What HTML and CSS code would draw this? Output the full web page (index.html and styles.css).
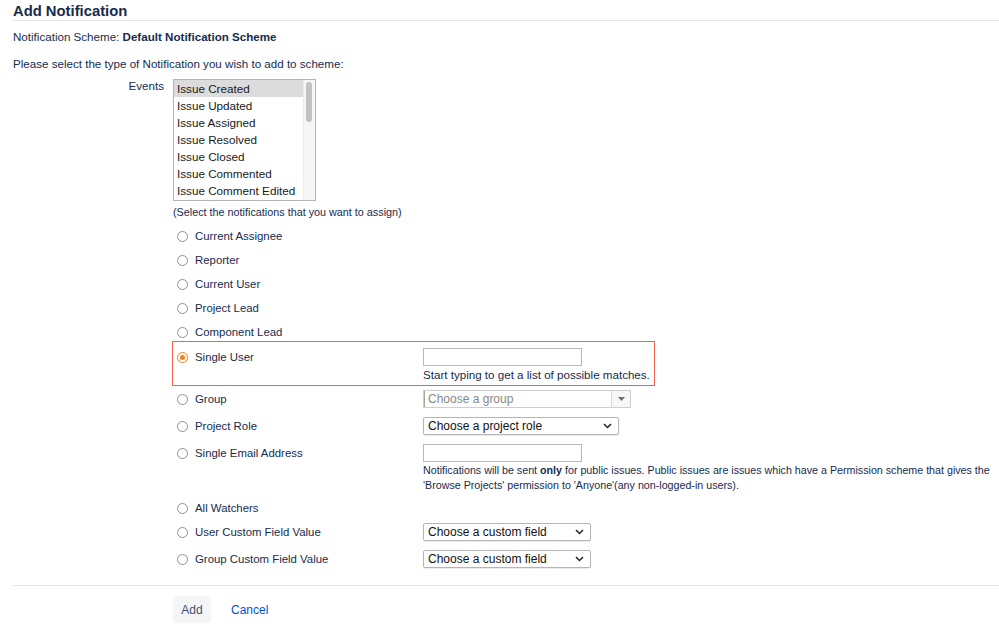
FILE: index.html
```html
<!DOCTYPE html>
<html>
<head>
  <title>Add Notification</title>
  <link rel="stylesheet" href="styles.css">
</head>
<body>
  <div class="page">
    <h2 class="page-title">Add Notification</h2>
    <p class="scheme">Notification Scheme: <b>Default Notification Scheme</b></p>
    <p class="intro">Please select the type of Notification you wish to add to scheme:</p>

    <div class="events">
      <div class="events-label">Events</div>
      <div class="events-field">
        <div class="listbox">
          <div class="list-items">
            <div class="list-item selected">Issue Created</div>
            <div class="list-item">Issue Updated</div>
            <div class="list-item">Issue Assigned</div>
            <div class="list-item">Issue Resolved</div>
            <div class="list-item">Issue Closed</div>
            <div class="list-item">Issue Commented</div>
            <div class="list-item">Issue Comment Edited</div>
          </div>
          <div class="list-scroll"><div class="list-thumb"></div></div>
        </div>
        <div class="events-hint">(Select the notifications that you want to assign)</div>
      </div>
    </div>

    <div class="options">
      <div class="opt">
        <span class="radio"></span><span class="opt-label">Current Assignee</span>
      </div>
      <div class="opt">
        <span class="radio"></span><span class="opt-label">Reporter</span>
      </div>
      <div class="opt">
        <span class="radio"></span><span class="opt-label">Current User</span>
      </div>
      <div class="opt">
        <span class="radio"></span><span class="opt-label">Project Lead</span>
      </div>
      <div class="opt">
        <span class="radio"></span><span class="opt-label">Component Lead</span>
      </div>
      <div class="opt highlight">
        <span class="radio checked"></span><span class="opt-label">Single User</span>
        <div class="opt-field">
          <input class="text-input" type="text">
          <div class="field-hint">Start typing to get a list of possible matches.</div>
        </div>
      </div>
      <div class="opt tall">
        <span class="radio"></span><span class="opt-label">Group</span>
        <div class="opt-field">
          <div class="group-picker">
            <span class="group-input">Choose a group</span>
            <span class="group-btn">
              <svg width="7" height="4" viewBox="0 0 7 4"><path d="M0 0h7L3.5 4z" fill="#707070"/></svg>
            </span>
          </div>
        </div>
      </div>
      <div class="opt tall">
        <span class="radio"></span><span class="opt-label">Project Role</span>
        <div class="opt-field">
          <div class="select role-select">
            <span>Choose a project role</span>
            <svg class="chev" width="9" height="6" viewBox="0 0 9 6"><path d="M1 1l3.5 3.5L8 1" fill="none" stroke="#222" stroke-width="1.5"/></svg>
          </div>
        </div>
      </div>
      <div class="opt email">
        <span class="radio"></span><span class="opt-label">Single Email Address</span>
        <div class="opt-field">
          <input class="text-input" type="text">
          <p class="field-note">Notifications will be sent <b>only</b> for public issues. Public issues are issues which have a Permission scheme that gives the 'Browse Projects' permission to 'Anyone'(any non-logged-in users).</p>
        </div>
      </div>
      <div class="opt">
        <span class="radio"></span><span class="opt-label">All Watchers</span>
      </div>
      <div class="opt tall">
        <span class="radio"></span><span class="opt-label">User Custom Field Value</span>
        <div class="opt-field">
          <div class="select cf-select">
            <span>Choose a custom field</span>
            <svg class="chev" width="9" height="6" viewBox="0 0 9 6"><path d="M1 1l3.5 3.5L8 1" fill="none" stroke="#222" stroke-width="1.5"/></svg>
          </div>
        </div>
      </div>
      <div class="opt tall">
        <span class="radio"></span><span class="opt-label">Group Custom Field Value</span>
        <div class="opt-field">
          <div class="select cf-select">
            <span>Choose a custom field</span>
            <svg class="chev" width="9" height="6" viewBox="0 0 9 6"><path d="M1 1l3.5 3.5L8 1" fill="none" stroke="#222" stroke-width="1.5"/></svg>
          </div>
        </div>
      </div>
    </div>

    <div class="buttons">
      <button class="add-btn">Add</button>
      <a class="cancel-link" href="#">Cancel</a>
    </div>
  </div>
</body>
</html>
```

FILE: styles.css
```css
body {
  margin: 0;
  font-family: "Liberation Sans", Arial, sans-serif;
  color: #172b4d;
  background: #fff;
}

.page {
  margin-left: 13px;
}

.page-title {
  margin: 0;
  padding-top: 2px;
  font-size: 14.8px;
  line-height: 18px;
  font-weight: bold;
  border-bottom: 1px solid #e4e6ea;
}

.scheme {
  margin: 7px 0 0;
  font-size: 11.6px;
  line-height: 18px;
}

.intro {
  margin: 9px 0 0;
  font-size: 11.6px;
  line-height: 18px;
}

.events {
  display: flex;
  margin-top: 6px;
  gap: 9px;
}

.events-label {
  width: 151px;
  text-align: right;
  font-size: 11.6px;
  line-height: 14px;
}

.listbox {
  display: flex;
  width: 141px;
  height: 120px;
  border: 1px solid #b4b4b4;
  background: #fff;
}

.list-items {
  flex: 1;
}

.list-item {
  height: 17px;
  line-height: 17px;
  padding-left: 3px;
  font-size: 11.7px;
  color: #1a1a1a;
}

.list-item.selected {
  background: #dcdcdc;
}

.list-scroll {
  width: 11px;
  background: #f6f6f6;
  border-left: 1px solid #ececec;
}

.list-thumb {
  width: 6px;
  height: 40px;
  margin: 2px 0 0 2px;
  border-radius: 3px;
  background: #c2c2c2;
}

.events-hint {
  margin-top: 4px;
  font-size: 10.8px;
  line-height: 14px;
}

.options {
  margin: 5px 0 0 160px;
}

.opt {
  display: grid;
  grid-template-columns: 22px 228px auto;
  align-items: start;
  width: max-content;
  padding: 3px 0;
  font-size: 11.4px;
  position: relative;
}

.opt.tall {
  padding-bottom: 6px;
}

.opt.email {
  padding-bottom: 3px;
}

.opt.highlight {
  padding-top: 4px;
}

.opt.highlight::after {
  content: "";
  position: absolute;
  left: -1px;
  right: -5px;
  top: -3px;
  bottom: 1px;
  border: 1px solid #f26149;
  pointer-events: none;
}

.radio {
  width: 11px;
  height: 11px;
  margin: 4px 0 0 4px;
  border: 1px solid #8d8f94;
  border-radius: 50%;
  background: #fff;
  box-sizing: border-box;
}

.radio.checked {
  border: 1.5px solid #f5821f;
  position: relative;
}

.radio.checked::before {
  content: "";
  position: absolute;
  left: 1.5px;
  top: 1.5px;
  width: 5px;
  height: 5px;
  border-radius: 50%;
  background: #f5821f;
}

.opt-label {
  line-height: 18px;
}

.opt-field {
  display: flex;
  flex-direction: column;
  align-items: flex-start;
}

.text-input {
  width: 159px;
  height: 18px;
  margin: 0;
  padding: 0 3px;
  border: 1px solid #b8b8b8;
  box-sizing: border-box;
  font-size: 12px;
}

.field-hint {
  line-height: 18px;
  font-size: 11.6px;
}

.field-note {
  width: 572px;
  margin: 1px 0 0;
  font-size: 10.7px;
  line-height: 15px;
}

.group-picker {
  display: flex;
  width: 208px;
  height: 18px;
  border: 1px solid #cfcfcf;
  box-sizing: border-box;
}

.group-input {
  flex: 1;
  padding-left: 3px;
  line-height: 16px;
  font-size: 12px;
  color: #888;
  border-left: 1px solid #a8a8a8;
}

.group-btn {
  display: flex;
  align-items: center;
  justify-content: center;
  width: 18px;
  border-left: 1px solid #d8d8d8;
  background: #f7f7f7;
}

.select {
  display: flex;
  align-items: center;
  justify-content: space-between;
  height: 18px;
  padding: 0 6px 0 4px;
  border: 1px solid #b5b5b5;
  border-radius: 2px;
  box-shadow: 0 1px 1px rgba(0, 0, 0, 0.08);
  box-sizing: border-box;
  background: #fff;
  font-size: 12px;
  color: #111;
}

.role-select {
  width: 196px;
}

.cf-select {
  width: 168px;
}

.buttons {
  display: flex;
  align-items: center;
  gap: 20px;
  margin-top: 11px;
  padding: 10px 0 0 160px;
  border-top: 1px solid #e4e6ea;
}

.add-btn {
  width: 38px;
  height: 27px;
  padding: 0;
  border: none;
  border-radius: 3px;
  background: #f4f5f7;
  color: #42526e;
  font-family: "Liberation Sans", Arial, sans-serif;
  font-size: 12px;
}

.cancel-link {
  color: #0052cc;
  text-decoration: none;
  font-size: 12px;
}
```
